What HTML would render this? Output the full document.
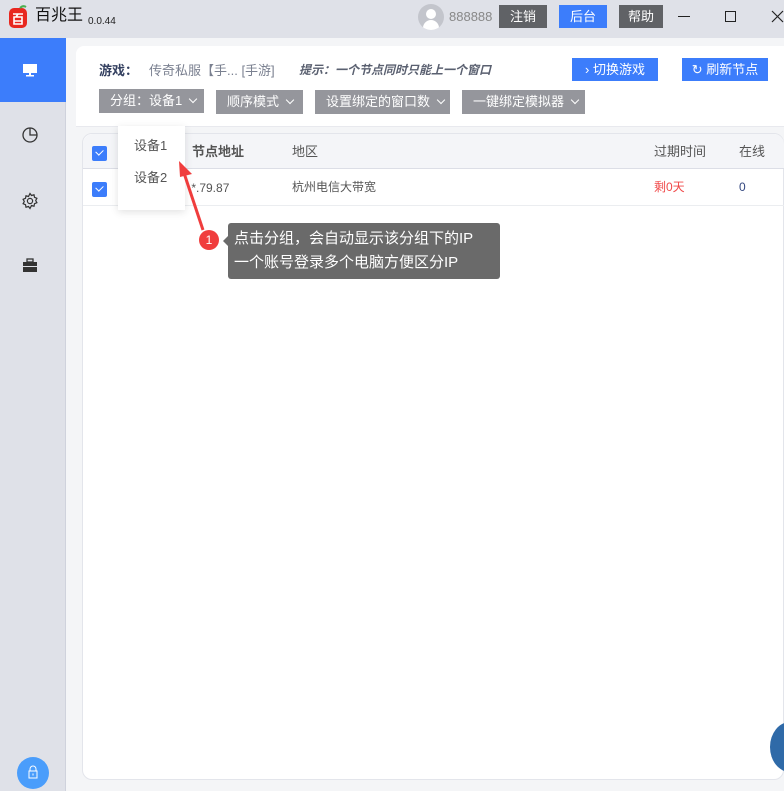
<!DOCTYPE html>
<html><head><meta charset="utf-8"><style>
*{margin:0;padding:0;box-sizing:border-box}
body{width:784px;height:791px;overflow:hidden;background:#f4f5f7;font-family:"Liberation Sans","Noto Sans CJK SC",sans-serif;position:relative;font-size:13px;line-height:1.2}
.abs{position:absolute}
.title{left:0;top:0;width:784px;height:38px;background:#dfe1e8}
.side{left:0;top:38px;width:66px;height:753px;background:#dfe1e8;border-right:1px solid #cfd2dc}
.btn{position:absolute;height:23px;line-height:23px;color:#fff;text-align:center;font-size:13px}
.gbtn{position:absolute;height:24px;line-height:24px;background:#95969c;color:#fff;font-size:13px;padding-left:11px}
.chev{display:inline-block;width:6px;height:6px;border-right:1px solid #fff;border-bottom:1px solid #fff;transform:rotate(45deg);margin-left:8px;position:relative;top:-3px}
.cb{position:absolute;width:15px;height:15px;background:#3c7dfb;border-radius:2px}
.cb:after{content:"";position:absolute;left:4px;top:3px;width:6px;height:4px;border-left:1.5px solid #fff;border-bottom:1.5px solid #fff;transform:rotate(-45deg)}
</style></head><body>
<div class="abs title"></div>
<svg class="abs" style="left:8px;top:5px" width="22" height="24" viewBox="0 0 22 24"><rect x="1" y="3" width="18" height="20" rx="5" fill="#e8271f"/><path d="M12 3 q3-3 6-1" stroke="#4caf50" stroke-width="2" fill="none"/><path d="M5 9h10M10 9l-2 3M6 12h8v7H6z M6 16h8" stroke="#fff" stroke-width="1.6" fill="none"/></svg>
<div class="abs" style="left:35px;top:6px;font-size:16px;color:#111">百兆王</div>
<div class="abs" style="left:88px;top:16px;font-size:10px;color:#222">0.0.44</div>
<div class="abs" style="left:418px;top:4px;width:26px;height:26px;border-radius:50%;background:#c3c5cc;overflow:hidden"><div class="abs" style="left:8px;top:5px;width:10px;height:10px;border-radius:50%;background:#fff"></div><div class="abs" style="left:5px;top:16px;width:16px;height:10px;border-radius:8px 8px 0 0;background:#fff"></div></div>
<div class="abs" style="left:449px;top:9px;color:#888;font-size:13px">888888</div>
<div class="btn" style="left:499px;top:5px;width:48px;background:#606266">注销</div>
<div class="btn" style="left:559px;top:5px;width:48px;background:#3c7dfb">后台</div>
<div class="btn" style="left:619px;top:5px;width:44px;background:#606266">帮助</div>
<div class="abs" style="left:678px;top:16px;width:12px;height:1px;background:#222"></div>
<div class="abs" style="left:725px;top:11px;width:11px;height:11px;border:1px solid #222"></div>
<svg class="abs" style="left:771px;top:10px" width="13" height="13"><path d="M1 1L12 12M12 1L1 12" stroke="#222" stroke-width="1.2"/></svg>

<div class="abs side"></div>
<div class="abs" style="left:0;top:38px;width:66px;height:64px;background:#3c7dfb"></div>
<svg class="abs" style="left:22px;top:63px" width="16" height="14"><rect x="1" y="1" width="14" height="9" fill="#fff"/><rect x="7" y="10" width="2" height="2" fill="#fff"/><rect x="4" y="12" width="8" height="1.5" fill="#fff"/></svg>
<svg class="abs" style="left:21px;top:126px" width="18" height="18"><circle cx="9" cy="9" r="7" stroke="#333" stroke-width="1.3" fill="none"/><path d="M9 2v7h7" stroke="#333" stroke-width="1.3" fill="none"/></svg>
<svg class="abs" style="left:21px;top:192px" width="18" height="18" viewBox="0 0 18 18"><path d="M9 1.5l1.5 2 2.5-.7.5 2.5 2.4 1-1.2 2.2 1.2 2.2-2.4 1-.5 2.5-2.5-.7L9 16.5l-1.5-2-2.5.7-.5-2.5-2.4-1L3.3 9.5 2.1 7.3l2.4-1 .5-2.5 2.5.7z" stroke="#333" stroke-width="1.2" fill="none"/><circle cx="9" cy="9" r="2.6" stroke="#333" stroke-width="1.2" fill="none"/></svg>
<svg class="abs" style="left:22px;top:258px" width="16" height="14"><rect x="5" y="1" width="6" height="3" stroke="#333" stroke-width="1.3" fill="none"/><rect x="1" y="4" width="14" height="4" fill="#333"/><rect x="1" y="9" width="14" height="5" fill="#333"/></svg>
<div class="abs" style="left:17px;top:757px;width:32px;height:32px;border-radius:50%;background:#4a9dfb"></div>
<svg class="abs" style="left:27px;top:765px" width="12" height="14"><path d="M3 6V4a3 3 0 0 1 6 0v2" stroke="#fff" fill="none"/><rect x="2" y="6" width="8" height="7" stroke="#fff" fill="none"/><rect x="5.5" y="8.5" width="1" height="2" fill="#fff"/></svg>

<div class="abs" style="left:76px;top:46px;width:708px;height:80px;background:#fff;border-radius:8px 0 0 0"></div>
<div class="abs" style="left:76px;top:126px;width:708px;height:1px;background:#e8e9ee"></div>
<div class="abs" style="left:99px;top:63px;font-weight:bold;color:#344060">游戏：</div>
<div class="abs" style="left:149px;top:63px;color:#7a8090">传奇私服【手... [手游]</div>
<div class="abs" style="left:299px;top:63px;color:#5a6070;font-style:italic;font-weight:bold;font-size:12px">提示：一个节点同时只能上一个窗口</div>
<div class="btn" style="left:572px;top:58px;width:86px;background:#3c7dfb">›&nbsp;切换游戏</div>
<div class="btn" style="left:682px;top:58px;width:86px;background:#3c7dfb">↻ 刷新节点</div>
<div class="gbtn" style="left:99px;top:89px;width:105px">分组：设备1<span class="chev"></span></div>
<div class="gbtn" style="left:216px;top:90px;width:87px">顺序模式<span class="chev"></span></div>
<div class="gbtn" style="left:315px;top:90px;width:135px">设置绑定的窗口数<span class="chev"></span></div>
<div class="gbtn" style="left:462px;top:90px;width:123px">一键绑定模拟器<span class="chev"></span></div>

<div class="abs" style="left:82px;top:133px;width:702px;height:647px;background:#fff;border:1px solid #e3e5eb;border-radius:10px"></div>
<div class="abs" style="left:83px;top:134px;width:701px;height:35px;background:#f4f5f8;border-bottom:1px solid #dcdee6;border-radius:10px 10px 0 0"></div>
<div class="cb" style="left:92px;top:146px"></div>
<div class="abs" style="left:192px;top:144px;color:#555;font-weight:bold">节点地址</div>
<div class="abs" style="left:292px;top:144px;color:#555">地区</div>
<div class="abs" style="left:654px;top:144px;color:#555">过期时间</div>
<div class="abs" style="left:739px;top:144px;color:#555">在线</div>
<div class="abs" style="left:83px;top:205px;width:701px;height:1px;background:#ebedf0"></div>
<div class="cb" style="left:92px;top:182px"></div>
<div class="abs" style="left:188px;top:181px;color:#555;font-size:12px">.*.79.87</div>
<div class="abs" style="left:292px;top:180px;color:#555;font-size:12px">杭州电信大带宽</div>
<div class="abs" style="left:654px;top:180px;color:#f04848;font-size:12px">剩0天</div>
<div class="abs" style="left:739px;top:180px;color:#344880;font-size:12px">0</div>

<div class="abs" style="left:118px;top:126px;width:67px;height:84px;background:#fff;box-shadow:0 2px 8px rgba(0,0,0,.12)"></div>
<div class="abs" style="left:134px;top:138px;color:#555">设备1</div>
<div class="abs" style="left:134px;top:170px;color:#555">设备2</div>

<svg class="abs" style="left:175px;top:160px" width="40" height="80"><path d="M28 70L8 10" stroke="#f03d3d" stroke-width="3"/><path d="M4 1L17 14L5 17z" fill="#f03d3d"/></svg>
<div class="abs" style="left:199px;top:230px;width:20px;height:20px;border-radius:50%;background:#f03d3d;color:#fff;text-align:center;line-height:20px;font-size:12px">1</div>
<div class="abs" style="left:228px;top:223px;width:272px;height:56px;background:#6a6a6a;border-radius:3px;color:#fff;font-size:15px;line-height:24px;padding:4px 6px"><div class="abs" style="left:-5px;top:13px;border:5px solid transparent;border-right-color:#6a6a6a;border-left:0"></div>点击分组，会自动显示该分组下的IP<br>一个账号登录多个电脑方便区分IP</div>
<div class="abs" style="left:770px;top:722px;width:40px;height:50px;border-radius:50%;background:#2f6aa8"></div>
</body></html>
